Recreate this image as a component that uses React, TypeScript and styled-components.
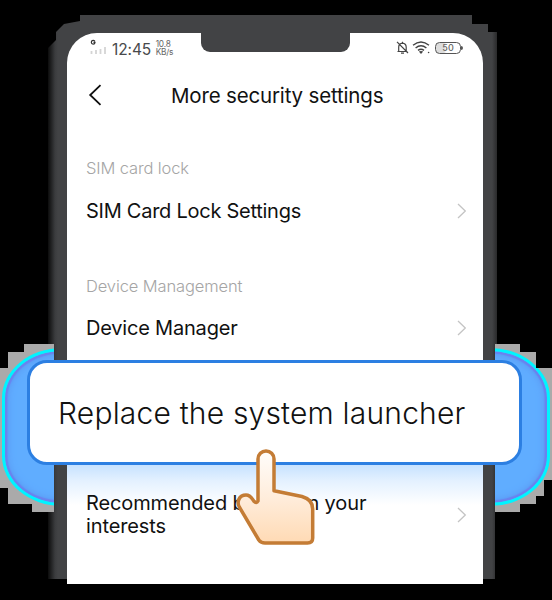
import React from "react";
import styled, { createGlobalStyle } from "styled-components";

const GlobalStyle = createGlobalStyle`
  * { box-sizing: border-box; }
  body { margin: 0; background: #000; font-family: Inter, "Liberation Sans", sans-serif; }
`;

const Stage = styled.main`
  position: relative;
  width: 552px;
  height: 600px;
  overflow: hidden;
  background: #000;
`;

const GlowPlate = styled.div`
  position: absolute;
  inset: 344px 0 88px 0;
  padding: 4px 2px 6px;
  background: #aaa;
  clip-path: polygon(
    24px 0, 520px 0, 520px 8px, 536px 8px, 536px 24px, 552px 24px, 552px 136px,
    544px 136px, 544px 152px, 536px 152px, 536px 160px, 520px 160px, 520px 168px,
    32px 168px, 32px 160px, 8px 160px, 8px 144px, 0 144px, 0 24px, 8px 24px, 8px 8px, 24px 8px
  );
`;

const Glow = styled.div`
  height: 158px;
  border: 3px solid #00f4ff;
  border-radius: 60px / 50px;
  background: #60adff;
  box-shadow: inset 0 0 1px 2.5px #6a83ef, inset 0 0 6px 4px #5b9df5;
`;

const Phone = styled.div`
  position: absolute;
  inset: 15px auto auto 48px;
  width: 449px;
  height: 569px;
  padding: 18px 14px 0 19px;
  background: linear-gradient(90deg, #0c0c0c 0, #3b3c3e 7px, #424345 10px, #424345 444px, #2a2a2b 449px);
  clip-path: polygon(
    32px 0, 424px 0, 424px 9px, 440px 9px, 440px 17px, 449px 17px, 449px 329px, 447px 329px,
    447px 564px, 435px 564px, 435px 569px, 19px 569px, 19px 564px, 0 564px,
    0 497px, 6px 497px, 6px 329px, 0 329px, 0 33px, 8px 25px, 8px 17px, 16px 9px, 32px 6px
  );
`;

const Screen = styled.div`
  height: 551px;
  border-radius: 30px 30px 0 0;
  background:
    linear-gradient(#c3e0ff, #e4f1ff 18px, #fff 42px) 0 430px / 100% 44px no-repeat,
    #fff;
`;

const StatusBar = styled.header`
  display: grid;
  grid-template-columns: 134px 149px 1fr;
  height: 30px;
`;

const Notch = styled.div`
  height: 19px;
  border-radius: 0 0 9px 9px;
  background: #424345;
`;

const StatusLeft = styled.div`
  display: flex;
  padding: 5px 0 0 22px;
  color: #48494b;
`;

const Clock = styled.span`
  margin: 1px 0 0 5px;
  font-size: 15.5px;
  line-height: 21px;
  letter-spacing: -0.1px;
`;

const Speed = styled.span`
  margin: 3px 0 0 4.5px;
  font-size: 8.3px;
  line-height: 7.6px;
  letter-spacing: -0.2px;
  color: #666;
  white-space: pre;
`;

const StatusRight = styled.div`
  display: flex;
  align-items: flex-start;
  padding: 8px 0 0 46px;
`;

const TitleBar = styled.div`
  display: flex;
  align-items: center;
  height: 64px;
  padding-left: 21px;
`;

const Title = styled.h1`
  margin: 2px 0 0 69px;
  font-size: 20.5px;
  font-weight: 400;
  line-height: 28px;
  letter-spacing: -0.17px;
  white-space: nowrap;
  color: #111;
`;

const GroupLabel = styled.h2<{ $gap: number }>`
  margin: ${(p) => p.$gap}px 0 0 19px;
  font-size: 16.5px;
  font-weight: 300;
  line-height: 22px;
  letter-spacing: -0.12px;
  color: #a5a5a5;
`;

const Row = styled.div<{ $gap: number }>`
  display: flex;
  align-items: center;
  justify-content: space-between;
  margin-top: ${(p) => p.$gap}px;
  padding: 0 16px 0 19px;
`;

const RowText = styled.span<{ $spacing?: number }>`
  font-size: 20px;
  line-height: 23px;
  letter-spacing: ${(p) => p.$spacing ?? 0}px;
  white-space: pre;
  color: #111;
`;

const Callout = styled.div`
  position: absolute;
  left: 27px;
  top: 360px;
  width: 495px;
  height: 105px;
  display: flex;
  align-items: center;
  padding-left: 28px;
  border: 3px solid #2c7fe2;
  border-radius: 20px;
  background: #fff;
`;

const CalloutText = styled.span`
  font-size: 30px;
  font-weight: 300;
  line-height: 40px;
  letter-spacing: 0.19px;
  white-space: nowrap;
  color: #111;
`;

const Hand = styled.svg`
  position: absolute;
  left: 236px;
  top: 448px;
`;

const Signal = () => (
  <svg width="18" height="18" viewBox="0 0 18 18">
    <path d="M5.9 3.3Q5.2 2.3 4 2.4Q2.3 2.6 2.3 4.3Q2.4 6.1 4.1 6.1Q6 6.1 6 4.4H4.5" fill="none" stroke="#333" strokeWidth="1.2" />
    <path d="M2.5 13v3M7 12v4M11.5 11v5M16 9v7" stroke="#d4d4d4" strokeWidth="1.8" />
  </svg>
);

const BellOff = () => (
  <svg width="13" height="14" viewBox="0 0 13 14" fill="none" stroke="#444" strokeWidth="1.2">
    <path d="M1.5 10.5h10M2.7 10.3V6Q2.8 2.5 6.5 2.2Q10 2.5 10.2 6v4.3M5 12.2h3M6.5.8v1.4M1 .8 12 12" />
  </svg>
);

const WifiIcon = styled.svg`
  margin-left: 3px;
`;

const Wifi = () => (
  <WifiIcon width="19" height="14" viewBox="0 0 19 14" fill="none" stroke="#444" strokeWidth="1.4">
    <path d="M1 4.3Q9-2.4 17 4.3M3.6 7Q9 2.5 14.4 7M6 9.4Q9 7 12 9.4" />
    <path d="m6.8 10.6 2.2 2.5 2.2-2.5Q9 9.4 6.8 10.6Z" fill="#444" stroke="none" />
    <circle cx="16.6" cy="11.5" r=".8" fill="#444" stroke="none" />
  </WifiIcon>
);

const BatteryShell = styled.span`
  display: flex;
  align-items: center;
  margin: 1px 0 0 4px;
`;

const BatteryBody = styled.span`
  width: 26px;
  height: 12px;
  border: 1px solid #555;
  border-radius: 4.5px;
  background: linear-gradient(90deg, #ddd 8px, #fff 10px);
  font-size: 9px;
  font-weight: 500;
  line-height: 10px;
  text-align: center;
  color: #666;
`;

const BatteryTip = styled.span`
  width: 2px;
  height: 4px;
  border-radius: 0 2px 2px 0;
  background: #555;
`;

const BackIcon = () => (
  <svg width="14" height="22" viewBox="0 0 14 22" fill="none" stroke="#111" strokeWidth="1.8">
    <path d="M12.5 1.2 2.2 11l10.3 9.8" />
  </svg>
);

const ChevronIcon = styled.svg`
  margin-bottom: 1px;
`;

const Chevron = () => (
  <ChevronIcon width="10" height="16" viewBox="0 0 10 16" fill="none" stroke="#c4c4c4" strokeWidth="1.3">
    <path d="m1 1 7.3 7L1 15" />
  </ChevronIcon>
);

export default function App() {
  return (
    <>
      <GlobalStyle />
      <Stage>
        <GlowPlate>
          <Glow />
        </GlowPlate>
        <Phone>
          <Screen>
            <StatusBar>
              <StatusLeft>
                <Signal />
                <Clock>12:45</Clock>
                <Speed>{"10.8\nKB/s"}</Speed>
              </StatusLeft>
              <Notch />
              <StatusRight>
                <BellOff />
                <Wifi />
                <BatteryShell>
                  <BatteryBody>50</BatteryBody>
                  <BatteryTip />
                </BatteryShell>
              </StatusRight>
            </StatusBar>
            <TitleBar>
              <BackIcon />
              <Title>More security settings</Title>
            </TitleBar>
            <GroupLabel $gap={30}>SIM card lock</GroupLabel>
            <Row $gap={21}>
              <RowText $spacing={-0.26}>SIM Card Lock Settings</RowText>
              <Chevron />
            </Row>
            <GroupLabel $gap={52}>Device Management</GroupLabel>
            <Row $gap={20}>
              <RowText $spacing={-0.2}>Device Manager</RowText>
              <Chevron />
            </Row>
            <Row $gap={152}>
              <RowText $spacing={-0.12}>{"Recommended based on your\ninterests"}</RowText>
              <Chevron />
            </Row>
          </Screen>
        </Phone>
        <Callout>
          <CalloutText>Replace the system launcher</CalloutText>
        </Callout>
        <Hand width="82" height="98" viewBox="236 448 82 98">
          <defs>
            <linearGradient id="skin" x1="0" y1="0" x2="0" y2="1">
              <stop offset="0" stopColor="#fffdfb" />
              <stop offset="0.5" stopColor="#ffeddc" />
              <stop offset="1" stopColor="#ffdab4" />
            </linearGradient>
          </defs>
          <path
            d="M258 459A8 8 0 0 1 274 459V490.7L302 496.5Q312.7 499.5 312.7 509V538Q312.7 543 307.5 543H265Q261 543 258.8 540L239.3 507C236.5 502 239 495 246 495C251 495 252 499 254 501.3Q256.5 504 258 501Z"
            fill="url(#skin)"
            stroke="#c47c35"
            strokeWidth="3.5"
            strokeLinejoin="round"
          />
        </Hand>
      </Stage>
    </>
  );
}
